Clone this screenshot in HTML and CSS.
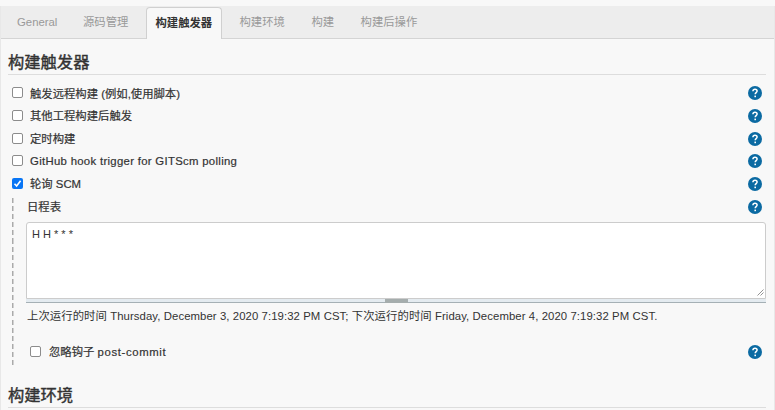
FILE: index.html
```html
<!DOCTYPE html>
<html lang="zh-CN">
<head>
<meta charset="utf-8">
<title>构建触发器</title>
<link rel="stylesheet" href="styles.css">
</head>
<body>
<svg class="defs" width="0" height="0">
  <symbol id="help" viewBox="0 0 14 14">
    <circle cx="7" cy="7" r="7" fill="#0b6aa2"/>
    <path d="M4.9 5.2C5 3.9 5.8 3.2 7 3.2c1.3 0 2.1.7 2.1 1.8 0 1.6-1.9 1.6-1.9 3.3" fill="none" stroke="#fff" stroke-width="1.5"/>
    <rect x="6.4" y="9.6" width="1.6" height="1.6" fill="#fff"/>
  </symbol>
</svg>
<main class="config">
  <nav class="tabs">
    <a class="tab general">General</a>
    <a class="tab source">源码管理</a>
    <a class="tab active">构建触发器</a>
    <a class="tab env">构建环境</a>
    <a class="tab">构建</a>
    <a class="tab">构建后操作</a>
  </nav>
  <section class="section">
    <h2>构建触发器</h2>
    <div class="options">
      <label class="row"><span class="check"></span><span class="label remote">触发远程构建 (例如,使用脚本)</span><svg class="help"><use href="#help"/></svg></label>
      <label class="row"><span class="check"></span><span class="label">其他工程构建后触发</span><svg class="help"><use href="#help"/></svg></label>
      <label class="row"><span class="check"></span><span class="label">定时构建</span><svg class="help"><use href="#help"/></svg></label>
      <label class="row"><span class="check"></span><span class="label github">GitHub hook trigger for GITScm polling</span><svg class="help"><use href="#help"/></svg></label>
      <label class="row"><span class="check checked"><svg viewBox="0 0 11 11"><path d="M2.5 5.8 4.6 8 8.6 2.7" fill="none" stroke="#fff" stroke-width="1.6"/></svg></span><span class="label">轮询 SCM</span><svg class="help"><use href="#help"/></svg></label>
    </div>
    <div class="nested">
      <div class="row schedule"><span class="label">日程表</span><svg class="help"><use href="#help"/></svg></div>
      <div class="editor">H H * * *<svg class="grip" viewBox="0 0 7 7"><path d="M.5 6.5l6-6M3.5 6.5l3-3" stroke="#777" stroke-width=".8"/></svg></div>
      <div class="handle"><span></span></div>
      <p class="message">上次运行的时间 Thursday, December 3, 2020 7:19:32 PM CST; 下次运行的时间 Friday, December 4, 2020 7:19:32 PM CST.</p>
      <label class="row ignore"><span class="check"></span><span class="label">忽略钩子 <span class="post">post-commit</span></span><svg class="help"><use href="#help"/></svg></label>
    </div>
  </section>
  <section class="section next"><h2>构建环境</h2></section>
</main>
</body>
</html>
```
FILE: styles.css
```css
* { box-sizing: border-box; }
body {
  margin: 0;
  height: 410px;
  overflow: hidden;
  background: #f8f8f8;
  color: #333;
  font: 11.35px/16px "Liberation Sans", "Noto Sans CJK SC", sans-serif;
}
.defs { display: block; }
.config {
  margin-top: 6px;
  height: 404px;
  border: solid #e8e8e8;
  border-width: 0 1px;
}
.tabs {
  display: flex;
  height: 33px;
  padding-left: 7px;
  background: #ededed;
  border-bottom: 1px solid #d4d4d4;
}
.tab {
  padding: 8px 9px 0;
  margin-right: 8.5px;
  color: #999;
  white-space: nowrap;
}
.tab.general { width: 57px; margin-right: 9px; }
.tab.source { width: 64px; margin-right: 0; }
.tab.active {
  width: 76px;
  height: 32px;
  margin: 1px 8.5px 0 8px;
  padding: 7px 0 0 8.5px;
  background: #f8f8f8;
  border: 1px solid #d0d0d0;
  border-bottom: 0;
  border-radius: 4px 4px 0 0;
  color: #333;
  font-weight: 700;
}
.section { padding: 0 8px 0 7px; }
h2 {
  margin: 0 0 7px;
  height: 36px;
  padding-top: 12px;
  border-bottom: 1px solid #ddd;
  color: #333;
  font-size: 16.3px;
  line-height: 22px;
  font-weight: 400;
  -webkit-text-stroke: .4px #333;
}
.row {
  display: flex;
  align-items: center;
  height: 22.7px;
  padding: 0 4px 0 3.5px;
}
.label {
  -webkit-text-stroke: .2px #333;
  white-space: nowrap;
}
.remote { padding-top: 1px; }
.github { letter-spacing: .31px; }
.post { letter-spacing: .63px; }
.check {
  flex: none;
  width: 11px;
  height: 11px;
  margin: -1px 7.5px 0 0;
  background: #fff;
  border: 1px solid #8c8c8c;
  border-radius: 2px;
}
.check.checked { background: #0875f5; border: 0; }
.check svg { display: block; }
.help { flex: none; width: 14px; height: 14px; margin-left: auto; }
.nested {
  height: 168px;
  margin: 3px 0 0 4px;
  padding-left: 14px;
  background: repeating-linear-gradient(#aaa 0 5px, transparent 5px 8.1px) 0 0 / 1.5px 100% no-repeat;
}
.schedule { height: 18px; padding-left: 1px; }
.editor {
  position: relative;
  height: 77px;
  margin-top: 6px;
  padding: 3px 5px;
  background: #fff;
  border: 1px solid #ccc;
  border-radius: 3px 3px 0 0;
  font-size: 11px;
}
.grip { position: absolute; right: 1px; bottom: 2px; width: 7px; height: 7px; }
.handle {
  height: 4px;
  background: #e4ebf0;
  border-bottom: 1px solid #a5b0b5;
}
.handle span { display: block; width: 23px; height: 4px; margin: 0 auto; background: #a5adad; }
.message { margin: 5px 0 0 1px; white-space: nowrap; letter-spacing: .08px; }
.ignore { margin-top: 16px; padding-left: 4px; }
.ignore .check { margin-right: 8px; }
.next h2 { height: 42px; padding-top: 18px; }
```
